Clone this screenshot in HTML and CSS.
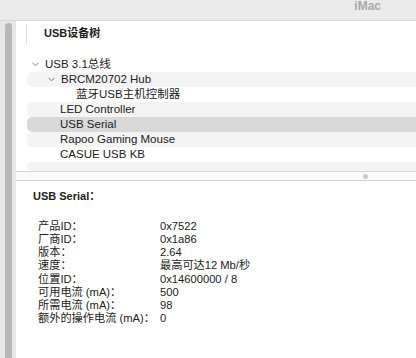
FILE: index.html
```html
<!DOCTYPE html>
<html>
<head>
<meta charset="utf-8">
<link rel="stylesheet" href="styles.css">
</head>
<body>
<div class="window">
  <div class="topbar"><span class="machine">iMac</span></div>
  <div class="main">
    <div class="sidebar"><div class="thumb"></div></div>
    <div class="panel">
      <div class="header">
        <div class="sep"></div>
        <div class="title">USB设备树</div>
      </div>
      <div class="tree">
        <div class="row lvl0"><svg class="chev" width="7" height="5" viewBox="0 0 7 5"><path d="M0.5 0.8 L3.5 3.8 L6.5 0.8" fill="none" stroke="#7a7a7a" stroke-width="1"/></svg><span>USB 3.1总线</span></div>
        <div class="row alt lvl1"><svg class="chev" width="7" height="5" viewBox="0 0 7 5"><path d="M0.5 0.8 L3.5 3.8 L6.5 0.8" fill="none" stroke="#7a7a7a" stroke-width="1"/></svg><span>BRCM20702 Hub</span></div>
        <div class="row lvl2"><span>蓝牙USB主机控制器</span></div>
        <div class="row alt lvl1b"><span>LED Controller</span></div>
        <div class="row sel lvl1b"><span>USB Serial</span></div>
        <div class="row alt lvl1b"><span>Rapoo Gaming Mouse</span></div>
        <div class="row lvl1b"><span>CASUE USB KB</span></div>
        <div class="row alt partial"></div>
      </div>
      <div class="splitter"><div class="dot"></div></div>
      <div class="details">
        <div class="dtitle">USB Serial：</div>
        <div class="props">
          <div class="k">产品ID：</div><div class="v">0x7522</div>
          <div class="k">厂商ID：</div><div class="v">0x1a86</div>
          <div class="k">版本：</div><div class="v">2.64</div>
          <div class="k">速度：</div><div class="v">最高可达12 Mb/秒</div>
          <div class="k">位置ID：</div><div class="v">0x14600000 / 8</div>
          <div class="k">可用电流 (mA)：</div><div class="v">500</div>
          <div class="k">所需电流 (mA)：</div><div class="v">98</div>
          <div class="k">额外的操作电流 (mA)：</div><div class="v">0</div>
        </div>
      </div>
    </div>
  </div>
</div>
</body>
</html>
```

FILE: styles.css
```css
* { box-sizing: border-box; }
html, body { margin: 0; padding: 0; }
body {
  width: 416px;
  height: 358px;
  overflow: hidden;
  font-family: "Liberation Sans", "Noto Sans CJK SC", sans-serif;
  font-size: 11.5px;
  color: #222;
  background: #fff;
}
.window { display: flex; flex-direction: column; height: 358px; }
.topbar {
  height: 21px;
  flex: none;
  background: #ebebeb;
  border-bottom: 1px solid #d6d6d6;
  display: flex;
  justify-content: flex-end;
  padding-right: 35px;
}
.machine {
  font-weight: bold;
  font-size: 12px;
  line-height: 12px;
  color: #a9a9a9;
  margin-top: 0;
}
.main { flex: 1; display: flex; min-height: 0; }
.sidebar {
  width: 16px;
  flex: none;
  background: #e7e7e7;
  padding: 2px 0 0 5px;
}
.thumb {
  width: 7px;
  height: 100%;
  background: #b8b8b8;
  border-radius: 4px 4px 0 0;
}
.panel { flex: 1; background: #fff; display: flex; flex-direction: column; }
.header {
  height: 36px;
  display: flex;
  padding-top: 4px;
}
.sep {
  width: 1px;
  height: 20px;
  background: #dedede;
  margin-left: 10px;
}
.title {
  margin-left: 17px;
  font-weight: bold;
  font-size: 11px;
  line-height: 16px;
  color: #1e1e1e;
}
.tree { display: flex; flex-direction: column; }
.row {
  height: 15px;
  margin-left: 11px;
  display: flex;
  align-items: center;
  line-height: 15px;
  border-radius: 5px 0 0 5px;
  white-space: nowrap;
}
.row.alt { background: #f4f4f4; }
.row.sel { background: #d9d9d9; }
.chev { flex: none; margin-right: 6px; }
.lvl0 { padding-left: 5px; }
.lvl1 { padding-left: 21px; }
.lvl1b { padding-left: 33px; }
.lvl2 { padding-left: 49px; }
.partial { height: 9px; }
.splitter {
  height: 10px;
  border-top: 1px solid #d4d4d4;
  border-bottom: 1px solid #d4d4d4;
  background: #fafafa;
  position: relative;
}
.dot {
  position: absolute;
  left: 347px;
  top: 2px;
  width: 5px;
  height: 5px;
  border-radius: 50%;
  background: #c9c9c9;
}
.details { padding: 8px 0 0 17px; }
.dtitle {
  font-weight: bold;
  font-size: 11px;
  line-height: 15px;
  color: #1e1e1e;
}
.props {
  margin-top: 16px;
  margin-left: 5px;
  display: grid;
  grid-template-columns: 122px auto;
  line-height: 13.15px;
  font-size: 11.2px;
}
```
